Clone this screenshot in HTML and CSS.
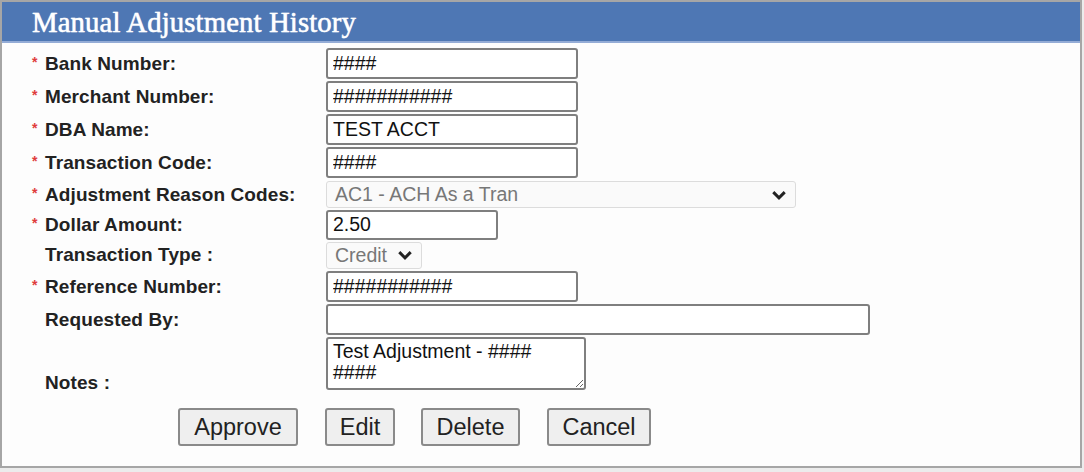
FILE: index.html
```html
<!DOCTYPE html>
<html>
<head>
<meta charset="utf-8">
<link rel="stylesheet" href="styles.css">
</head>
<body>
<div class="frame">
  <div class="header"><h1 class="title">Manual Adjustment History</h1></div>
  <div class="form">
    <div class="row r-input">
      <label class="lbl"><span class="req">*</span>Bank Number:</label>
      <input class="txt w252" value="####">
    </div>
    <div class="row r-input">
      <label class="lbl"><span class="req">*</span>Merchant Number:</label>
      <input class="txt w252" value="###########">
    </div>
    <div class="row r-input">
      <label class="lbl"><span class="req">*</span>DBA Name:</label>
      <input class="txt w252" value="TEST ACCT">
    </div>
    <div class="row r-input">
      <label class="lbl"><span class="req">*</span>Transaction Code:</label>
      <input class="txt w252" value="####">
    </div>
    <div class="row r-select">
      <label class="lbl"><span class="req">*</span>Adjustment Reason Codes:</label>
      <div class="sel w470"><span>AC1 - ACH As a Tran</span><svg class="chev" viewBox="0 0 14 10"><path d="M2 2.5 L7 7.5 L12 2.5" fill="none" stroke="#222" stroke-width="2.6"/></svg></div>
    </div>
    <div class="row r-dollar">
      <label class="lbl"><span class="req">*</span>Dollar Amount:</label>
      <input class="txt w172 h30" value="2.50">
    </div>
    <div class="row r-type">
      <label class="lbl nreq">Transaction Type :</label>
      <div class="sel w96"><span>Credit</span><svg class="chev" viewBox="0 0 14 10"><path d="M2 2.5 L7 7.5 L12 2.5" fill="none" stroke="#222" stroke-width="2.6"/></svg></div>
    </div>
    <div class="row r-input">
      <label class="lbl"><span class="req">*</span>Reference Number:</label>
      <input class="txt w252" value="###########">
    </div>
    <div class="row r-input">
      <label class="lbl nreq">Requested By:</label>
      <input class="txt w544" value="">
    </div>
    <div class="row r-notes">
      <label class="lbl nreq">Notes :</label>
      <textarea class="area">Test Adjustment - #### ####</textarea>
    </div>
    <div class="buttons">
      <button class="btn b-approve">Approve</button>
      <button class="btn b-edit">Edit</button>
      <button class="btn b-delete">Delete</button>
      <button class="btn b-cancel">Cancel</button>
    </div>
  </div>
</div>
</body>
</html>
```

FILE: styles.css
```css
html, body {
  margin: 0;
  padding: 0;
  background: #ececec;
}
body {
  width: 1084px;
  height: 472px;
  overflow: hidden;
  font-family: "Liberation Sans", Arial, sans-serif;
}
.frame {
  box-sizing: border-box;
  width: 1082px;
  height: 468px;
  border: 2px solid #a6a6a6;
  background: #fdfdfd;
}
.header {
  height: 39px;
  background: #4e77b4;
  border-bottom: 2px solid #94acd6;
  padding-left: 30px;
  display: flex;
  align-items: center;
}
.title {
  margin: 0;
  font-family: "Liberation Serif", "Times New Roman", serif;
  font-weight: normal;
  font-size: 28.8px;
  color: #fff;
  text-shadow: 0 0 1px rgba(255,255,255,0.8);
  letter-spacing: 0.1px;
  -webkit-text-stroke: 0.3px #fff;
  margin-top: 1px;
}
.form {
  padding-top: 4px;
  padding-left: 30px;
  display: flex;
  flex-direction: column;
}
.row {
  display: flex;
  align-items: center;
}
.r-input { height: 33px; }
.r-select { height: 29px; padding-top: 1px; }
.r-dollar { height: 31px; }
.r-type { height: 30px; }
.r-notes { height: 54px; align-items: flex-end; padding-top: 0; }
.lbl {
  box-sizing: border-box;
  width: 294px;
  flex: none;
  font-weight: bold;
  font-size: 19px;
  color: #222;
  letter-spacing: 0.1px;
  display: flex;
  align-items: center;
}
.r-notes .lbl { margin-bottom: -4px; }
.req {
  color: #e03c3c;
  font-size: 14px;
  width: 13px;
  margin-top: -4px;
}
.nreq { padding-left: 13px; }
.txt {
  box-sizing: border-box;
  height: 31px;
  border: 2px solid #7f7f7f;
  border-radius: 3px;
  padding: 0 5px;
  font-family: "Liberation Sans", Arial, sans-serif;
  font-size: 19.5px;
  color: #111;
  background: #fff;
  margin: 0;
}
.h30 { height: 30px; }
.w252 { width: 252px; }
.w172 { width: 172px; }
.w544 { width: 544px; }
.sel {
  box-sizing: border-box;
  height: 27px;
  border: 1px solid #dcdcdc;
  border-radius: 3px;
  background: #fafafa;
  color: #777;
  font-size: 19.5px;
  display: flex;
  align-items: center;
  justify-content: space-between;
  padding: 0 8px 0 8px;
}
.w470 { width: 470px; }
.w96 { width: 96px; }
.chev { width: 16px; height: 12px; }
.area {
  box-sizing: border-box;
  width: 260px;
  height: 53px;
  border: 2px solid #7f7f7f;
  border-radius: 3px;
  padding: 2px 5px;
  font-family: "Liberation Sans", Arial, sans-serif;
  font-size: 19.5px;
  line-height: 21px;
  color: #111;
  resize: both;
  margin: 0;
  background: #fff;
}
.buttons {
  display: flex;
  padding-left: 146px;
  padding-top: 18px;
}
.btn {
  box-sizing: border-box;
  height: 38px;
  border: 2px solid #8a8a8a;
  border-radius: 3px;
  background: #efefef;
  font-family: "Liberation Sans", Arial, sans-serif;
  font-size: 23.5px;
  color: #222;
  padding: 0;
  margin: 0;
}
.b-approve { width: 120px; margin-right: 27px; }
.b-edit { width: 70px; margin-right: 26px; }
.b-delete { width: 99px; margin-right: 27px; }
.b-cancel { width: 104px; }
```
